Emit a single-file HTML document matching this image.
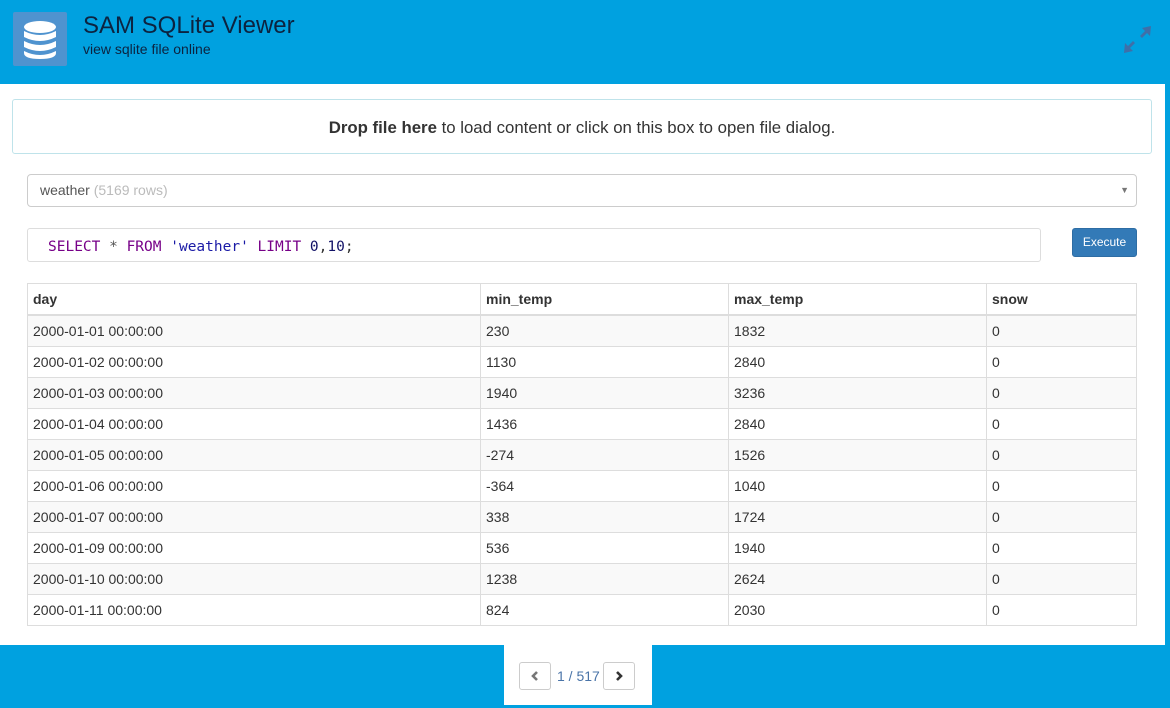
<!DOCTYPE html>
<html><head><style>
body{margin:0;width:1170px;height:708px;background:#00a1e0;font-family:"Liberation Sans",sans-serif;position:relative;overflow:hidden;color:#333}
.logo{position:absolute;left:13px;top:12px;width:54px;height:54px;background:#4f93cf;border-radius:2px}
h1{position:absolute;left:83px;top:12px;margin:0;font-size:24px;font-weight:normal;color:#0c2340}
.sub{position:absolute;left:83px;top:41px;font-size:14px;color:#0c2340}
.panel{position:absolute;left:0;top:84px;width:1165px;height:561px;background:#fff}
.drop{position:absolute;left:12px;top:15px;width:1138px;height:53px;border:1px solid #bfe3ea;border-radius:3px;text-align:center;line-height:55px;font-size:16.8px}
.sel{position:absolute;left:27px;top:90px;height:33px;border:1px solid #ccc;border-radius:4px;font-size:14px;line-height:31px;padding-left:12px;box-sizing:border-box;width:1110px;color:#555}
.sql{position:absolute;left:27px;top:144px;width:1014px;height:34px;border:1px solid #ddd;border-radius:3px;font-family:"DejaVu Sans Mono",monospace;font-size:14.5px;line-height:37px;padding-left:20px;box-sizing:border-box;color:#770088}
.btn{position:absolute;left:1072px;top:144px;width:65px;height:29px;background:#337ab7;border:1px solid #2e6da4;border-radius:3px;color:#fff;font-size:12px;text-align:center;line-height:27px;box-sizing:border-box}
table{position:absolute;left:27px;top:199px;border-collapse:collapse;font-size:14px;width:1110px}
td,th{border:1px solid #ddd;height:30px;padding:0 5px;text-align:left}
th{border-bottom:2px solid #ddd;font-weight:bold}
tr:nth-child(even) td{background:#f9f9f9}
.pg{position:absolute;left:504px;top:645px;width:148px;height:60px;background:#fff}
.pb{position:absolute;top:17px;width:32px;height:28px;border:1px solid #ccc;border-radius:3px;box-sizing:border-box}
</style></head><body>
<div class="logo"><svg width="54" height="54" viewBox="0 0 54 54"><g fill="#fff"><ellipse cx="27" cy="15" rx="16" ry="6"/><path d="M11 19q16 8 32 0v6q-16 8-32 0z"/><path d="M11 29q16 8 32 0v6q-16 8-32 0z"/><path d="M11 39q16 8 32 0v2q0 6-16 6t-16-6z"/></g></svg></div>
<h1>SAM SQLite Viewer</h1>
<div class="sub">view sqlite file online</div>
<svg style="position:absolute;left:1124px;top:26px" width="28" height="28" viewBox="0 0 28 28"><g fill="#3f6fa8"><path d="M27 0l-1 10-3-3-5 5-2-2 5-5-3-3z"/><path d="M0 27l1-10 3 3 5-5 2 2-5 5 3 3z"/></g></svg>
<div class="panel">
<div class="drop"><b>Drop file here</b> to load content or click on this box to open file dialog.</div>
<div class="sel">weather <span style="color:#bbb">(5169 rows)</span><span style="position:absolute;right:7px;font-size:9px;color:#777">▼</span></div>
<div class="sql">SELECT <span style="color:#555">*</span> FROM <span style="color:#1a1aa6">'weather'</span> LIMIT <span style="color:#116">0</span><span style="color:#333">,</span><span style="color:#116">10</span><span style="color:#333">;</span></div>
<div class="btn">Execute</div>
<table>
<colgroup><col style="width:453px"><col style="width:248px"><col style="width:258px"><col></colgroup>
<tr><th>day</th><th>min_temp</th><th>max_temp</th><th>snow</th></tr>
<tr><td>2000-01-01 00:00:00</td><td>230</td><td>1832</td><td>0</td></tr>
<tr><td>2000-01-02 00:00:00</td><td>1130</td><td>2840</td><td>0</td></tr>
<tr><td>2000-01-03 00:00:00</td><td>1940</td><td>3236</td><td>0</td></tr>
<tr><td>2000-01-04 00:00:00</td><td>1436</td><td>2840</td><td>0</td></tr>
<tr><td>2000-01-05 00:00:00</td><td>-274</td><td>1526</td><td>0</td></tr>
<tr><td>2000-01-06 00:00:00</td><td>-364</td><td>1040</td><td>0</td></tr>
<tr><td>2000-01-07 00:00:00</td><td>338</td><td>1724</td><td>0</td></tr>
<tr><td>2000-01-09 00:00:00</td><td>536</td><td>1940</td><td>0</td></tr>
<tr><td>2000-01-10 00:00:00</td><td>1238</td><td>2624</td><td>0</td></tr>
<tr><td>2000-01-11 00:00:00</td><td>824</td><td>2030</td><td>0</td></tr>
</table>
</div>
<div class="pg">
<div class="pb" style="left:15px"><svg width="30" height="26" viewBox="0 0 30 26"><path d="M17 9l-4 4 4 4" fill="none" stroke="#777" stroke-width="2.6"/></svg></div>
<div style="position:absolute;left:53px;top:17px;line-height:28px;font-size:14px;color:#4a74a8">1 / 517</div>
<div class="pb" style="left:99px"><svg width="30" height="26" viewBox="0 0 30 26"><path d="M13 9l4 4-4 4" fill="none" stroke="#333" stroke-width="2.6"/></svg></div>
</div>
</body></html>
